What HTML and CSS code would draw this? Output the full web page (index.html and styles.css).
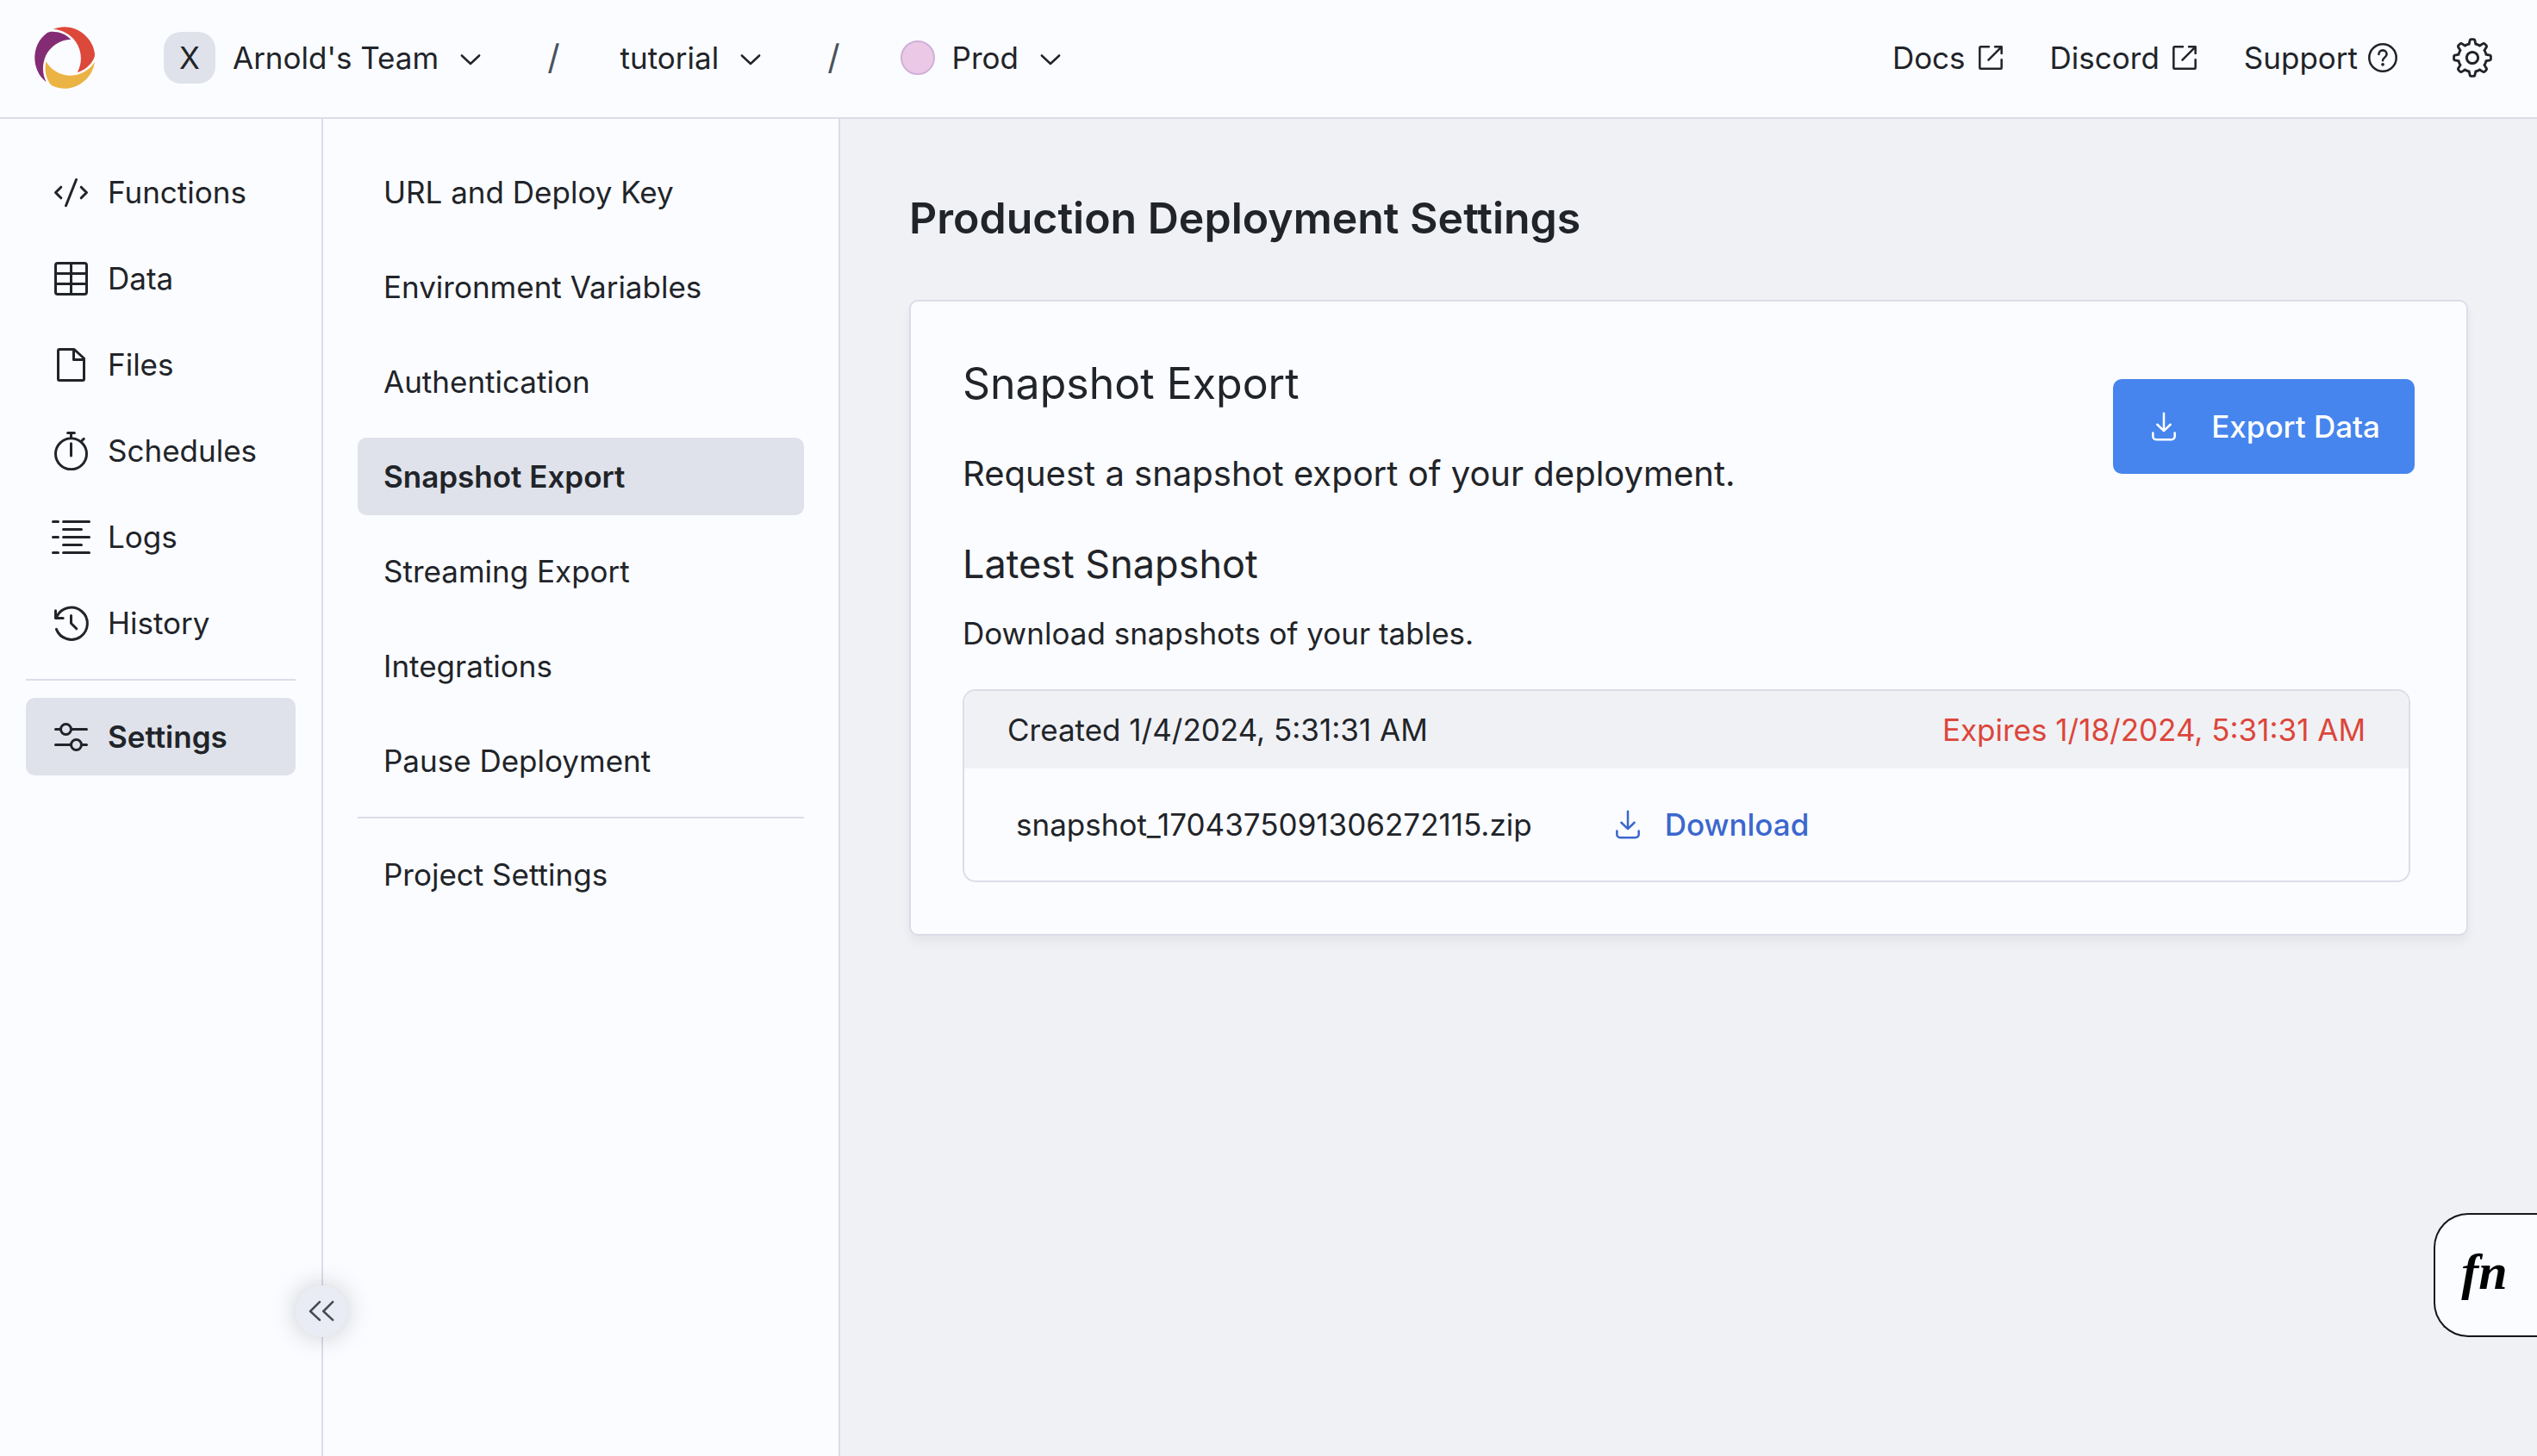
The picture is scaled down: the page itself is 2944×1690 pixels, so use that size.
FILE: index.html
```html
<!DOCTYPE html>
<html lang="en">
<head>
<meta charset="utf-8">
<meta name="viewport" content="width=device-width, initial-scale=1">
<title>Production Deployment Settings</title>
<link rel="stylesheet" href="styles.css">
</head>
<body>
<svg class="sprite" aria-hidden="true">
  <symbol id="chevron-down" viewBox="0 0 15 15"><path d="M3.5 6.5 7.5 10.25 11.5 6.5"/></symbol>
  <symbol id="external" viewBox="0 0 15 15"><path d="M6.7 2.5H3a.5.5 0 0 0-.5.5v9a.5.5 0 0 0 .5.5h9a.5.5 0 0 0 .5-.5V8.4M9.5 2.5h3v3M12.3 2.7 6.5 8.5"/></symbol>
  <symbol id="help" viewBox="0 0 15 15"><circle cx="7.5" cy="7.5" r="6.2"/><path d="M5.7 5.9c0-1 .8-1.8 1.8-1.8s1.8.8 1.8 1.8c0 1.4-1.8 1.5-1.8 2.9"/><circle class="dot" cx="7.5" cy="10.6" r=".75"/></symbol>
  <symbol id="download" viewBox="0 0 15 15"><path d="M7.5 1.5v8M4.5 6.6l3 2.9 3-2.9M2.5 10.5V12A1.5 1.5 0 0 0 4 13.5h7a1.5 1.5 0 0 0 1.5-1.5v-1.5"/></symbol>
</svg>

<header class="topbar">
  <a class="logo" href="#" aria-label="Home">
    <svg viewBox="30.5 31 122.5 126" aria-hidden="true">
      <path fill="#ebb344" d="M108.092 130.021C126.258 128.003 143.385 118.323 152.815 102.167C148.349 142.128 104.653 167.385 68.9858 151.878C65.6992 150.453 62.8702 148.082 60.9288 145.034C52.9134 132.448 50.2786 116.433 54.0644 101.899C64.881 120.567 86.8748 132.01 108.092 130.021Z"/>
      <path fill="#832c74" d="M53.4012 90.1735C46.0375 107.191 45.7186 127.114 54.7463 143.51C22.9759 119.608 23.3226 68.4578 54.358 44.7949C57.2286 42.6078 60.64 41.3097 64.2178 41.1121C78.9312 40.336 93.8804 46.0225 104.364 56.6193C83.0637 56.831 62.318 70.4756 53.4012 90.1735Z"/>
      <path fill="#dc483a" d="M114.637 61.8552C103.89 46.8701 87.0686 36.6684 68.6387 36.358C104.264 20.1876 148.085 46.4045 152.856 85.1654C153.3 88.7635 152.717 92.4322 151.122 95.6775C144.466 109.195 132.124 119.679 117.702 123.559C128.269 103.96 126.965 80.0151 114.637 61.8552Z"/>
    </svg>
  </a>
  <nav class="crumbs" aria-label="Breadcrumb">
    <button class="crumb" type="button"><span class="badge">X</span>Arnold's Team<svg class="icon" aria-hidden="true"><use href="#chevron-down"/></svg></button>
    <span class="slash">/</span>
    <button class="crumb" type="button">tutorial<svg class="icon" aria-hidden="true"><use href="#chevron-down"/></svg></button>
    <span class="slash">/</span>
    <button class="crumb" type="button"><span class="env"></span>Prod<svg class="icon" aria-hidden="true"><use href="#chevron-down"/></svg></button>
  </nav>
  <div class="links">
    <a class="link" href="#">Docs<svg class="icon" aria-hidden="true"><use href="#external"/></svg></a>
    <a class="link" href="#">Discord<svg class="icon" aria-hidden="true"><use href="#external"/></svg></a>
    <a class="link" href="#">Support<svg class="icon" aria-hidden="true"><use href="#help"/></svg></a>
  </div>
  <button class="gear" type="button" aria-label="Preferences">
    <svg viewBox="0 0 15 15" aria-hidden="true"><path fill="currentColor" fill-rule="evenodd" clip-rule="evenodd" d="M7.07095 0.650238C6.67391 0.650238 6.32977 0.925096 6.24198 1.31231L6.0039 2.36247C5.6249 2.47269 5.26335 2.62363 4.92436 2.81013L4.01335 2.23585C3.67748 2.02413 3.23978 2.07312 2.95903 2.35386L2.35294 2.95996C2.0722 3.2407 2.0232 3.6784 2.23493 4.01427L2.80942 4.92561C2.62307 5.2645 2.47227 5.62594 2.36216 6.00481L1.31209 6.24287C0.924883 6.33065 0.650024 6.6748 0.650024 7.07183V7.92897C0.650024 8.32601 0.924883 8.67015 1.31209 8.75794L2.36228 8.99603C2.47246 9.375 2.62335 9.73652 2.80979 10.0755L2.2354 10.9867C2.02367 11.3225 2.07267 11.7602 2.35341 12.041L2.95951 12.6471C3.24025 12.9278 3.67795 12.9768 4.01382 12.7651L4.92506 12.1907C5.26384 12.377 5.62516 12.5278 6.0039 12.6379L6.24198 13.6881C6.32977 14.0753 6.67391 14.3502 7.07095 14.3502H7.92809C8.32512 14.3502 8.66927 14.0753 8.75705 13.6881L8.99505 12.6383C9.37411 12.5282 9.73573 12.3773 10.0748 12.1909L10.986 12.7653C11.3218 12.977 11.7595 12.928 12.0403 12.6473L12.6464 12.0412C12.9271 11.7604 12.9761 11.3227 12.7644 10.9869L12.1902 10.076C12.3768 9.73688 12.5278 9.37515 12.638 8.99596L13.6879 8.75794C14.0751 8.67015 14.35 8.32601 14.35 7.92897V7.07183C14.35 6.6748 14.0751 6.33065 13.6879 6.24287L12.6381 6.00488C12.528 5.62578 12.3771 5.26414 12.1906 4.92507L12.7648 4.01407C12.9766 3.6782 12.9276 3.2405 12.6468 2.95975L12.0407 2.35366C11.76 2.07292 11.3223 2.02392 10.9864 2.23565L10.0755 2.80989C9.73622 2.62328 9.37437 2.47229 8.99505 2.36209L8.75705 1.31231C8.66927 0.925096 8.32512 0.650238 7.92809 0.650238H7.07095ZM4.92053 3.81251C5.44724 3.44339 6.05665 3.18424 6.71543 3.06839L7.07095 1.50024H7.92809L8.28355 3.06816C8.94267 3.18387 9.5524 3.44302 10.0794 3.81224L11.4397 2.9549L12.0458 3.56099L11.1882 4.92117C11.5573 5.44798 11.8164 6.0575 11.9321 6.71638L13.5 7.07183V7.92897L11.932 8.28444C11.8162 8.94342 11.557 9.55301 11.1878 10.0798L12.0453 11.4402L11.4392 12.0462L10.0787 11.1886C9.55192 11.5576 8.94241 11.8166 8.28355 11.9323L7.92809 13.5002H7.07095L6.71543 11.932C6.0569 11.8162 5.44772 11.5572 4.92116 11.1883L3.56055 12.046L2.95445 11.4399L3.81213 10.0794C3.4431 9.55266 3.18403 8.94326 3.06825 8.2845L1.50002 7.92897V7.07183L3.06818 6.71632C3.18388 6.05765 3.44283 5.44833 3.81171 4.92165L2.95398 3.561L3.56008 2.95491L4.92053 3.81251ZM9.02496 7.50008C9.02496 8.34226 8.34223 9.02499 7.50005 9.02499C6.65786 9.02499 5.97513 8.34226 5.97513 7.50008C5.97513 6.65789 6.65786 5.97516 7.50005 5.97516C8.34223 5.97516 9.02496 6.65789 9.02496 7.50008ZM9.92496 7.50008C9.92496 8.83932 8.83929 9.92499 7.50005 9.92499C6.1608 9.92499 5.07513 8.83932 5.07513 7.50008C5.07513 6.16084 6.1608 5.07516 7.50005 5.07516C8.83929 5.07516 9.92496 6.16084 9.92496 7.50008Z"/></svg>
  </button>
</header>

<div class="workspace">
  <nav class="sidebar" aria-label="Deployment">
    <a class="item" href="#"><svg class="icon" viewBox="0 0 15 15" aria-hidden="true"><path d="M9.5 2.5 5.5 12.6M3.6 5.4 1.5 7.5l2.1 2.1M11.4 5.4l2.1 2.1-2.1 2.1"/></svg>Functions</a>
    <a class="item" href="#"><svg class="icon" viewBox="0 0 15 15" aria-hidden="true"><rect x="1.5" y="1.5" width="12" height="12" rx=".8"/><path d="M7.5 1.5v12M1.5 5.5h12M1.5 9.5h12"/></svg>Data</a>
    <a class="item" href="#"><svg class="icon" viewBox="0 0 15 15" aria-hidden="true"><path d="M3 1.5h5.7L12.5 5v8a.5.5 0 0 1-.5.5H3a.5.5 0 0 1-.5-.5V2a.5.5 0 0 1 .5-.5ZM8.5 1.5v4h4"/></svg>Files</a>
    <a class="item" href="#"><svg class="icon" viewBox="0 0 15 15" aria-hidden="true"><circle cx="7.5" cy="8.6" r="6"/><path d="M6.2.5h2.6M7.5.5v2M7.5 4.6v4.7M11.6 3.6l.8-.8"/></svg>Schedules</a>
    <a class="item" href="#"><svg class="icon" viewBox="0 0 15 15" aria-hidden="true"><path d="M.5 1.5h2M4.5 1.5h10M4.5 4.5h7M.5 7.5h2M4.5 7.5h10M4.5 10.5h7M.5 13.5h2M4.5 13.5h10"/></svg>Logs</a>
    <a class="item" href="#"><svg class="icon" viewBox="0 0 15 15" aria-hidden="true"><path d="M1.8 9.8A6.2 6.2 0 1 0 2 4.9M1.5 2.6v2.9h2.9M7.5 4.5v3l2.1 2.1"/></svg>History</a>
    <hr class="rule">
    <a class="item current" href="#" aria-current="page"><svg class="icon" viewBox="0 0 15 15" aria-hidden="true"><circle cx="5.5" cy="4.5" r="2"/><circle cx="9.5" cy="10.5" r="2"/><path d="M1.5 4.5h2M7.5 4.5h6M1.5 10.5h6M11.5 10.5h2"/></svg>Settings</a>
    <button class="collapse" type="button" aria-label="Collapse sidebar"><svg class="icon" viewBox="0 0 15 15" aria-hidden="true"><path d="M6.7 3.2 2.4 7.5l4.3 4M12.7 3.2 8.4 7.5l4.3 4"/></svg></button>
  </nav>

  <nav class="submenu" aria-label="Settings">
    <a class="item" href="#">URL and Deploy Key</a>
    <a class="item" href="#">Environment Variables</a>
    <a class="item" href="#">Authentication</a>
    <a class="item current" href="#" aria-current="page">Snapshot Export</a>
    <a class="item" href="#">Streaming Export</a>
    <a class="item" href="#">Integrations</a>
    <a class="item" href="#">Pause Deployment</a>
    <hr class="rule">
    <a class="item" href="#">Project Settings</a>
  </nav>

  <main class="content">
    <h1 class="title">Production Deployment Settings</h1>
    <section class="card">
      <div class="intro">
        <div class="intro-text">
          <h2 class="heading">Snapshot Export</h2>
          <p class="lead">Request a snapshot export of your deployment.</p>
        </div>
        <button class="export" type="button"><svg class="icon" aria-hidden="true"><use href="#download"/></svg>Export Data</button>
      </div>
      <h3 class="subheading">Latest Snapshot</h3>
      <p class="note">Download snapshots of your tables.</p>
      <div class="snapshot">
        <div class="snapshot-head"><span>Created 1/4/2024, 5:31:31 AM</span><span class="expires">Expires 1/18/2024, 5:31:31 AM</span></div>
        <div class="snapshot-row"><span>snapshot_1704375091306272115.zip</span><a class="download" href="#"><svg class="icon" aria-hidden="true"><use href="#download"/></svg>Download</a></div>
      </div>
    </section>
  </main>
  <button class="runner" type="button" aria-label="Run functions">fn</button>
</div>
</body>
</html>
```
FILE: styles.css
```css
:root {
  --surface: #fbfcff;
  --canvas: #f0f1f5;
  --selected: #dfe2ea;
  --border: #dcdcea;
  --text: #212429;
}

* {
  box-sizing: border-box;
}

body {
  margin: 0;
  min-height: 100vh;
  display: flex;
  flex-direction: column;
  background: var(--canvas);
  color: var(--text);
  font: 400 35px/50px Inter, "Liberation Sans", sans-serif;
}

h1, h2, h3, p {
  margin: 0;
  font-weight: 400;
}

a {
  color: inherit;
  text-decoration: none;
}

button {
  margin: 0;
  padding: 0;
  border: 0;
  background: none;
  color: inherit;
  font: inherit;
  cursor: pointer;
}

.sprite {
  position: absolute;
  width: 0;
  height: 0;
}

.icon {
  flex: none;
  width: 38px;
  height: 38px;
  fill: none;
  stroke: currentColor;
  stroke-linecap: round;
  stroke-linejoin: round;
}

.dot {
  fill: currentColor;
  stroke: none;
}

/* Top bar */
.topbar {
  display: flex;
  align-items: center;
  padding: 31px 50px 33px 40px;
  border-bottom: 2px solid var(--border);
  background: var(--surface);
}

.logo,
.logo svg {
  display: block;
  width: 70px;
  height: 72px;
}

.crumbs {
  display: flex;
  align-items: center;
  gap: 70px;
  margin-left: 80px;
}

.crumb {
  display: flex;
  align-items: center;
  gap: 20px;
}

.crumb .icon {
  margin-left: -2px;
}

.badge {
  width: 60px;
  border-radius: 20px;
  background: var(--selected);
  line-height: 60px;
  text-align: center;
}

.slash {
  color: #4a525c;
  font-size: 40px;
}

.env {
  width: 40px;
  height: 40px;
  border: 2px solid #cfb0d8;
  border-radius: 50%;
  background: #ebc9e6;
}

.links {
  display: flex;
  gap: 50px;
  margin-left: auto;
}

.link {
  display: flex;
  align-items: center;
  gap: 10px;
}

.gear,
.gear svg {
  display: block;
  width: 50px;
  height: 50px;
}

.gear {
  margin-left: 60px;
}

/* Navigation columns */
.workspace {
  position: relative;
  flex: 1;
  display: flex;
}

.sidebar,
.submenu {
  position: relative;
  flex: none;
  display: flex;
  flex-direction: column;
  border-right: 2px solid var(--border);
  background: var(--surface);
}

.sidebar {
  width: 375px;
  padding: 40px 30px;
  gap: 10px;
}

.submenu {
  width: 600px;
  padding: 40px;
  gap: 20px;
}

.item {
  display: flex;
  align-items: center;
  gap: 20px;
  padding: 20px 30px;
  border-radius: 10px;
}

.sidebar .item .icon {
  width: 45px;
  height: 45px;
}

.current {
  background: var(--selected);
  font-weight: 600;
}

.rule {
  width: 100%;
  height: 2px;
  margin: 0;
  border: 0;
  background: var(--border);
}

.sidebar .rule {
  margin: 10px 0;
}

.collapse {
  position: absolute;
  right: -30px;
  bottom: 138px;
  z-index: 1;
  width: 60px;
  height: 60px;
  display: grid;
  place-items: center;
  border-radius: 50%;
  background: #e9ecf4;
  box-shadow: 0 0 30px rgba(0, 0, 0, 0.2);
  color: #454b54;
}

/* Page content */
.content {
  flex: 1;
  padding: 80px;
}

.title {
  margin-bottom: 60px;
  font-size: 50px;
  font-weight: 600;
  line-height: 70px;
}

.card {
  padding: 60px;
  border: 2px solid var(--border);
  border-radius: 10px;
  background: var(--surface);
  box-shadow: 0 8px 12px rgba(0, 0, 0, 0.05);
}

.intro {
  display: flex;
  align-items: center;
  justify-content: space-between;
  margin-bottom: 40px;
}

.heading {
  margin-bottom: 40px;
  font-size: 50px;
  line-height: 70px;
}

.lead {
  font-size: 40px;
  line-height: 60px;
}

.export {
  display: flex;
  align-items: center;
  gap: 36px;
  padding: 30px 40px;
  border-radius: 10px;
  background: #4685ee;
  color: #fff;
  font-weight: 500;
}

.subheading {
  margin-bottom: 20px;
  font-size: 45px;
  line-height: 70px;
}

.snapshot {
  margin: 40px 5px 0 0;
  border: 2px solid var(--border);
  border-radius: 15px;
  overflow: hidden;
}

.snapshot-head {
  display: flex;
  justify-content: space-between;
  padding: 20px 50px;
  background: var(--canvas);
}

.expires {
  color: #dc463a;
}

.snapshot-row {
  display: flex;
  align-items: center;
  gap: 92px;
  padding: 40px 60px;
}

.download {
  display: flex;
  align-items: center;
  gap: 24px;
  color: #3b67cd;
  font-weight: 500;
}

/* Function runner tab docked to the window edge */
.runner {
  position: absolute;
  right: 0;
  bottom: 138px;
  width: 120px;
  height: 144px;
  padding: 0 4px 8px 0;
  border: 2px solid #14161a;
  border-right: 0;
  border-radius: 40px 0 0 40px;
  background: var(--surface);
  color: #000;
  font: italic 700 60px/60px "Liberation Serif", serif;
}
```
